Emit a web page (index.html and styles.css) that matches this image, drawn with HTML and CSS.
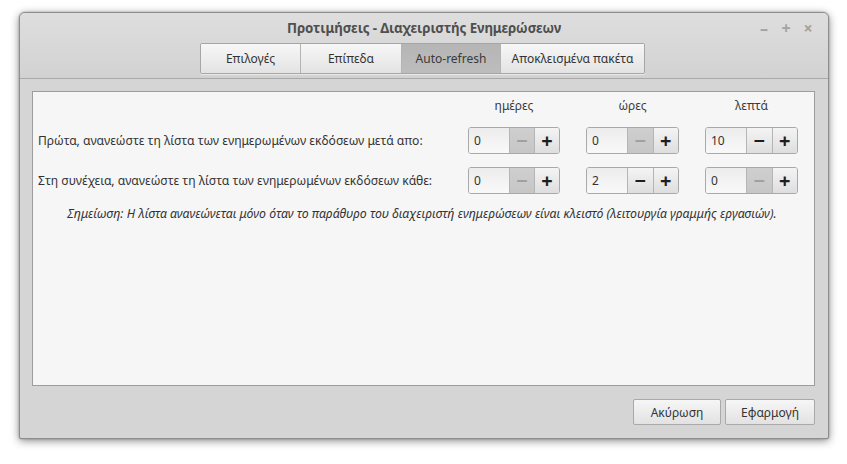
FILE: index.html
```html
<!DOCTYPE html>
<html lang="el">
<head>
<meta charset="utf-8">
<title>Προτιμήσεις</title>
<link rel="stylesheet" href="styles.css">
</head>
<body>
<div class="window">
  <div class="header">
    <div class="titlebar">
      <span class="title">Προτιμήσεις - Διαχειριστής Ενημερώσεων</span>
      <div class="wm">
        <span class="wm-btn">–</span>
        <span class="wm-btn">+</span>
        <span class="wm-btn">×</span>
      </div>
    </div>
    <div class="tabs">
      <div class="tab t1">Επιλογές</div>
      <div class="tab t2">Επίπεδα</div>
      <div class="tab t3 active">Auto-refresh</div>
      <div class="tab t4">Αποκλεισμένα πακέτα</div>
    </div>
  </div>
  <div class="body">
    <div class="panel">
      <div class="grid">
        <div></div>
        <div class="colhead">ημέρες</div>
        <div class="colhead">ώρες</div>
        <div class="colhead">λεπτά</div>

        <div class="label">Πρώτα, ανανεώστε τη λίστα των ενημερωμένων εκδόσεων μετά απο:</div>
        <div class="spin"><span class="val">0</span><span class="btn dis">−</span><span class="btn">+</span></div>
        <div class="spin"><span class="val">0</span><span class="btn dis">−</span><span class="btn">+</span></div>
        <div class="spin"><span class="val">10</span><span class="btn">−</span><span class="btn">+</span></div>

        <div class="label">Στη συνέχεια, ανανεώστε τη λίστα των ενημερωμένων εκδόσεων κάθε:</div>
        <div class="spin"><span class="val">0</span><span class="btn dis">−</span><span class="btn">+</span></div>
        <div class="spin"><span class="val">2</span><span class="btn">−</span><span class="btn">+</span></div>
        <div class="spin"><span class="val">0</span><span class="btn dis">−</span><span class="btn">+</span></div>
      </div>
      <div class="note">Σημείωση: Η λίστα ανανεώνεται μόνο όταν το παράθυρο του διαχειριστή ενημερώσεων είναι κλειστό (λειτουργία γραμμής εργασιών).</div>
    </div>
    <div class="actions">
      <button class="action cancel">Ακύρωση</button>
      <button class="action apply">Εφαρμογή</button>
    </div>
  </div>
</div>
</body>
</html>
```
FILE: styles.css
```css
html, body {
  margin: 0;
  padding: 0;
  background: #ffffff;
}
body {
  width: 847px;
  height: 464px;
  font-family: "Noto Sans", "Open Sans", sans-serif;
  color: #333333;
  overflow: hidden;
}
.window {
  margin: 12px 0 0 19px;
  width: 810px;
  height: 427px;
  box-sizing: border-box;
  border: 1px solid #8e8e8e;
  border-radius: 6px 6px 2px 2px;
  background: #d5d5d5;
  box-shadow: 0 2px 8px rgba(0,0,0,0.45), 0 0 2px rgba(0,0,0,0.3);
  display: flex;
  flex-direction: column;
  overflow: hidden;
}
.header {
  background: linear-gradient(#dedede, #d2d2d2);
  border-bottom: 1px solid #a9a9a9;
  height: 66px;
  box-sizing: border-box;
  display: flex;
  flex-direction: column;
  align-items: center;
}
.titlebar {
  position: relative;
  width: 100%;
  height: 30px;
  display: flex;
  align-items: center;
  justify-content: center;
}
.title {
  font-size: 13.3px;
  font-weight: bold;
  color: #4f4f4f;
  letter-spacing: -0.1px;
}
.wm {
  position: absolute;
  right: 13px;
  top: 4px;
  display: flex;
  gap: 8px;
}
.wm-btn {
  color: #a2a2a2;
  font-size: 16px;
  font-weight: bold;
  width: 14px;
  text-align: center;
}
.tabs {
  display: flex;
  height: 31px;
  margin-right: 3px;
  box-sizing: border-box;
  border: 1px solid #a6a6a6;
  border-radius: 2px;
  overflow: hidden;
  box-shadow: 0 1px 0 rgba(255,255,255,0.5);
}
.tab {
  display: flex;
  align-items: center;
  justify-content: center;
  font-size: 12px;
  color: #333;
  background: linear-gradient(#f7f7f7, #e3e3e3);
  border-left: 1px solid #b4b4b4;
}
.tab.t1 { width: 99px; border-left: none; }
.tab.t2 { width: 100px; }
.tab.t3 { width: 98px; }
.tab.t4 { width: 143px; }
.tab.active {
  background: linear-gradient(#b5b5b5, #bdbdbd);
  color: #3a3a3a;
}
.body {
  flex: 1;
  padding: 12px 13px 12px 12px;
  display: flex;
  flex-direction: column;
}
.panel {
  height: 295px;
  box-sizing: border-box;
  border: 1px solid #9d9d9d;
  background: #f6f6f6;
  padding: 6px 16px 0 5px;
}
.grid {
  display: grid;
  grid-template-columns: 1fr 92px 93px 93px;
  column-gap: 26px;
  row-gap: 13px;
  align-items: center;
}
.colhead {
  text-align: center;
  font-size: 12px;
  line-height: 16px;
  color: #3a3a3a;
}
.label {
  font-size: 12.1px;
  color: #333;
}
.spin {
  display: flex;
  height: 27px;
  box-sizing: border-box;
  border: 1px solid #a9a9a9;
  border-radius: 3px;
  overflow: hidden;
}
.val {
  width: 40px;
  box-sizing: border-box;
  padding-left: 5px;
  display: flex;
  align-items: center;
  font-size: 12px;
  color: #333;
  background: linear-gradient(#ececec, #f9f9f9);
}
.btn {
  flex: 1;
  display: flex;
  align-items: center;
  justify-content: center;
  font-size: 20px;
  font-weight: bold;
  color: #1e1e1e;
  background: linear-gradient(#f4f4f4, #dedede);
  border-left: 1px solid #b5b5b5;
}
.btn.dis {
  color: #a0a0a0;
  background: linear-gradient(#cfcfcf, #c6c6c6);
}
.note {
  margin-top: 11px;
  text-align: center;
  font-size: 12.3px;
  font-style: italic;
  color: #333;
  padding-left: 8px;
}
.actions {
  margin-top: 13px;
  display: flex;
  justify-content: flex-end;
  gap: 4px;
}
.action {
  height: 26px;
  box-sizing: border-box;
  border: 1px solid #a9a9a9;
  border-radius: 2px;
  background: linear-gradient(#f6f6f6, #e2e2e2);
  font-family: "Noto Sans", "Open Sans", sans-serif;
  font-size: 12px;
  color: #333;
  padding: 0;
}
.cancel { width: 88px; }
.apply { width: 90px; }
```
